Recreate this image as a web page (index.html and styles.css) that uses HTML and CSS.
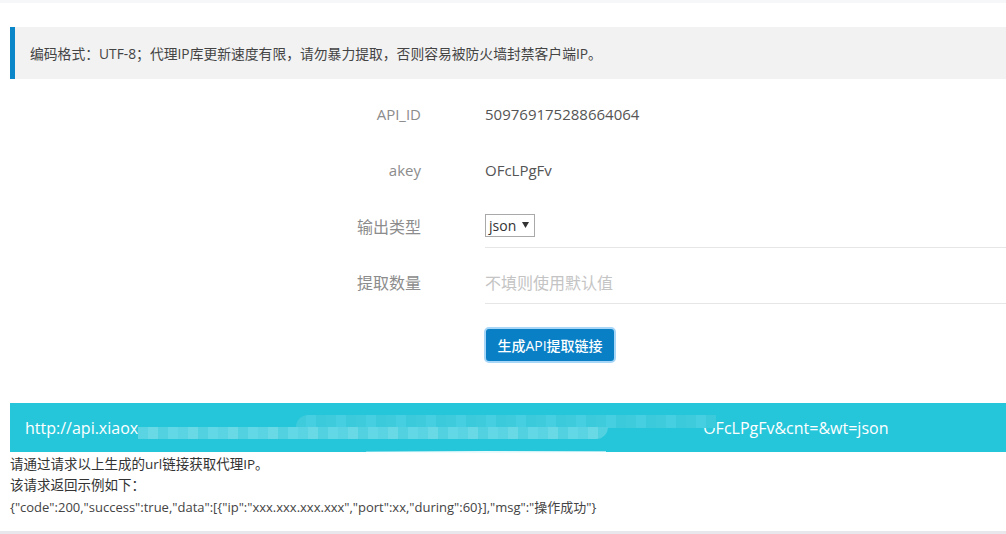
FILE: index.html
```html
<!DOCTYPE html>
<html lang="zh-CN">
<head>
<meta charset="utf-8">
<title>API提取</title>
<link rel="stylesheet" href="styles.css">
</head>
<body>
<div class="topstrip"></div>
<div class="page">
  <div class="notice">编码格式：UTF-8；代理IP库更新速度有限，请勿暴力提取，否则容易被防火墙封禁客户端IP。</div>

  <div class="form">
    <div class="row">
      <div class="label">API_ID</div>
      <div class="value">509769175288664064</div>
    </div>
    <div class="row">
      <div class="label">akey</div>
      <div class="value">OFcLPgFv</div>
    </div>
    <div class="row">
      <div class="label zh">输出类型</div>
      <div class="field">
        <div class="select"><span>json</span><svg width="7" height="6" viewBox="0 0 7 6"><path d="M0 0H7L3.5 6Z" fill="#333"/></svg></div>
      </div>
    </div>
    <div class="row">
      <div class="label zh">提取数量</div>
      <div class="field">
        <span class="placeholder">不填则使用默认值</span>
      </div>
    </div>
    <div class="row btnrow">
      <div class="label"></div>
      <button class="btn">生成API提取链接</button>
    </div>
  </div>

  <div class="urlbar">
    <span class="url">http://api.xiaox</span><span class="redact"><span class="band b1"></span><span class="band b2"></span><span class="streak"></span></span><span class="url">OFcLPgFv&amp;cnt=&amp;wt=json</span>
  </div>

  <div class="desc">
    <p>请通过请求以上生成的url链接获取代理IP。</p>
    <p>该请求返回示例如下：</p>
    <p class="json">{"code":200,"success":true,"data":[{"ip":"xxx.xxx.xxx.xxx","port":xx,"during":60}],"msg":"操作成功"}</p>
  </div>
</div>
<div class="bottomline"></div>
</body>
</html>
```

FILE: styles.css
```css
* { box-sizing: border-box; }
html, body { margin: 0; padding: 0; background: #fff; }
body {
  font-family: "Open Sans", "Noto Sans CJK SC", sans-serif;
  color: #333;
  width: 1006px;
  height: 534px;
  overflow: hidden;
}
.topstrip { height: 3px; background: #f6f7f9; }
.page { padding-left: 10px; }

.notice {
  margin-top: 24px;
  height: 52px;
  background: #f2f2f2;
  border-left: 5px solid #0a86c9;
  padding-left: 15px;
  display: flex;
  align-items: center;
  font-size: 13.8px;
  color: #444;
  white-space: nowrap;
}

.form { padding-top: 7px; }
.row {
  display: flex;
  align-items: center;
  height: 56px;
}
.label {
  width: 411px;
  flex: none;
  text-align: right;
  font-size: 15px;
  color: #8c8c8c;
  margin-right: 64px;
}
.label.zh { font-size: 16px; }
.value { font-size: 15px; color: #555; }
.field {
  align-self: stretch;
  flex: 1;
  height: 50px;
  padding-top: 6px;
  border-bottom: 1px solid #e6e6e6;
  display: flex;
  align-items: center;
}
.select {
  width: 50px;
  height: 23px;
  border: 1px solid #a9a9a9;
  display: flex;
  align-items: center;
  padding-left: 3px;
  gap: 6px;
  font-size: 14px;
  color: #333;
}
.select svg { margin-top: -2px; }
.placeholder { font-size: 16px; color: #c4c4c4; }

.btnrow { height: auto; margin-top: 17px; }
.btnrow .label { width: 410px; }
.btn {
  width: 132px;
  height: 36px;
  border: 2px solid #a8d6f7;
  border-radius: 5px;
  background: #0980c6;
  color: #fff;
  font-family: "Open Sans", "Noto Sans CJK SC", sans-serif;
  font-size: 14px;
  font-weight: 500;
  padding: 0;
}

.urlbar {
  margin-top: 40px;
  height: 49px;
  background: #26c6da;
  display: flex;
  align-items: center;
  padding-left: 15px;
  color: #fff;
  font-size: 16px;
  white-space: nowrap;
}
.redact {
  position: relative;
  display: inline-block;
  width: 565px;
  height: 26px;
}
.band { position: absolute; }
.b1 {
  left: 158px; top: 0; width: 420px; height: 13px;
  background: repeating-linear-gradient(90deg, #3ecbdc 0 10px, #45cfe0 10px 20px, #3acadb 20px 30px);
  border-radius: 12px 0 0 0;
}
.b2 {
  left: 0; top: 12px; width: 470px; height: 12px;
  background: repeating-linear-gradient(90deg, #5ad4e3 0 10px, #6ad9e6 10px 20px, #52d1e1 20px 30px, #62d7e5 30px 40px);
  border-radius: 0 0 24px 0;
}
.streak {
  position: absolute;
  left: 228px; top: 36px; width: 240px; height: 2px;
  background: linear-gradient(90deg, rgba(255,255,255,0.3), #e8fafc, rgba(255,255,255,0.6));
}

.desc { padding-top: 2px; }
.desc p {
  margin: 0;
  font-size: 13.5px;
  line-height: 21px;
  color: #333;
}
.desc p.json { font-size: 13px; line-height: 23px; color: #444; }

.bottomline {
  position: absolute;
  left: 0; top: 531px;
  width: 1006px; height: 3px;
  background: #e8e8ec;
}
```
